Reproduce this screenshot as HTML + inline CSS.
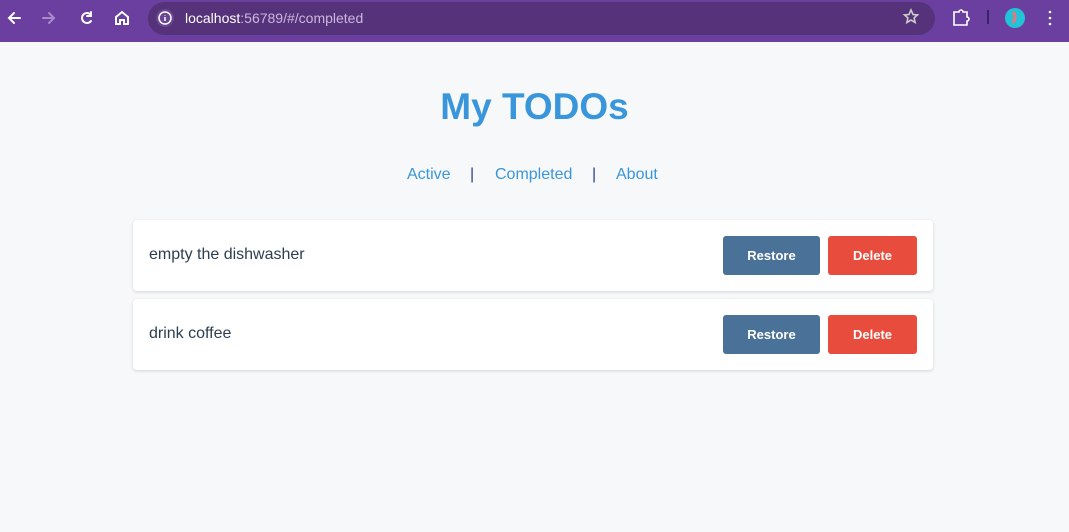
<!DOCTYPE html>
<html><head><style>
*{box-sizing:border-box;margin:0;padding:0}
body{width:1069px;height:532px;background:#f7f8fa;font-family:"Liberation Sans",sans-serif;position:relative;overflow:hidden}
.bar{position:absolute;left:0;top:0;width:1069px;height:42px;background:#6a3fa0}
.url{position:absolute;left:148px;top:2px;width:787px;height:33px;border-radius:17px;background:#553279}
.urltxt{position:absolute;left:185px;top:10px;font-size:14px;color:#c9b8de}
.urltxt b{font-weight:normal;color:#fff}
h1{position:absolute;left:0;width:1069px;top:86px;text-align:center;font-size:37px;color:#3a96db;font-weight:bold}
.nav{position:absolute;top:166px;font-size:16px;color:#3a96db}
.card{position:absolute;left:133px;width:800px;height:71px;background:#fff;border-radius:4px;box-shadow:0 1px 3px rgba(0,0,0,.15)}
.card span{position:absolute;left:16px;top:26px;font-size:16px;color:#2c3e50}
.btn{position:absolute;top:16px;height:39px;border-radius:3px;color:#fff;font-weight:bold;font-size:13px;text-align:center;line-height:39px}
.r{left:590px;width:97px;background:#4a7298}
.d{left:695px;width:89px;background:#e84c3d}
</style></head><body>
<div class="bar">
<svg width="140" height="42" style="position:absolute;left:0;top:0" fill="none" stroke-width="2" stroke-linecap="round">
<path d="M20 18H9M14 13l-5 5 5 5" stroke="#fff"/>
<path d="M43 18h11M49 13l5 5-5 5" stroke="#a88bc8"/>
<path d="M91 15a5 5 0 1 0 0 6M91 12v4h-4" stroke="#fff"/>
<path d="M116 24v-7l6-5 6 5v7h-4v-4h-4v4z" stroke="#fff"/>
</svg>
</div>
<div class="url"></div>
<svg width="20" height="20" style="position:absolute;left:155px;top:8px"><circle cx="10" cy="10" r="9" fill="#6a4592"/><circle cx="10" cy="10" r="6" fill="none" stroke="#fff" stroke-width="1.5"/><path d="M10 9v4M10 7v.5" stroke="#fff" stroke-width="1.5"/></svg>
<div class="urltxt"><b>localhost</b>:56789/#/completed</div>
<svg width="160" height="42" style="position:absolute;left:900px;top:0" fill="none" stroke="#fff" stroke-width="1.6">
<path d="M11 10l2 4.5 4.5.4-3.4 3 1 4.6-4.1-2.4-4.1 2.4 1-4.6-3.4-3 4.5-.4z" stroke="#ccc"/>
<path d="M54 12h5a2 2 0 0 1 4 0h4v5a2 2 0 0 1 0 4v4H54z"/>
<path d="M88 10v14" stroke="#3b2260" stroke-width="2"/>
<circle cx="115" cy="18" r="10" fill="#22c3d6" stroke="none"/>
<path d="M113 12q4 4 0 11" stroke="#e8757f" stroke-width="3"/>
<circle cx="150" cy="12" r="1.3" fill="#fff" stroke="none"/><circle cx="150" cy="18" r="1.3" fill="#fff" stroke="none"/><circle cx="150" cy="24" r="1.3" fill="#fff" stroke="none"/>
</svg>
<h1>My TODOs</h1>
<div class="nav" style="left:407px">Active</div>
<div class="nav" style="left:470px;color:#2c3e8f">|</div>
<div class="nav" style="left:495px">Completed</div>
<div class="nav" style="left:592px;color:#2c3e8f">|</div>
<div class="nav" style="left:616px">About</div>
<div class="card" style="top:220px"><span>empty the dishwasher</span><div class="btn r">Restore</div><div class="btn d">Delete</div></div>
<div class="card" style="top:299px"><span>drink coffee</span><div class="btn r">Restore</div><div class="btn d">Delete</div></div>
</body></html>
